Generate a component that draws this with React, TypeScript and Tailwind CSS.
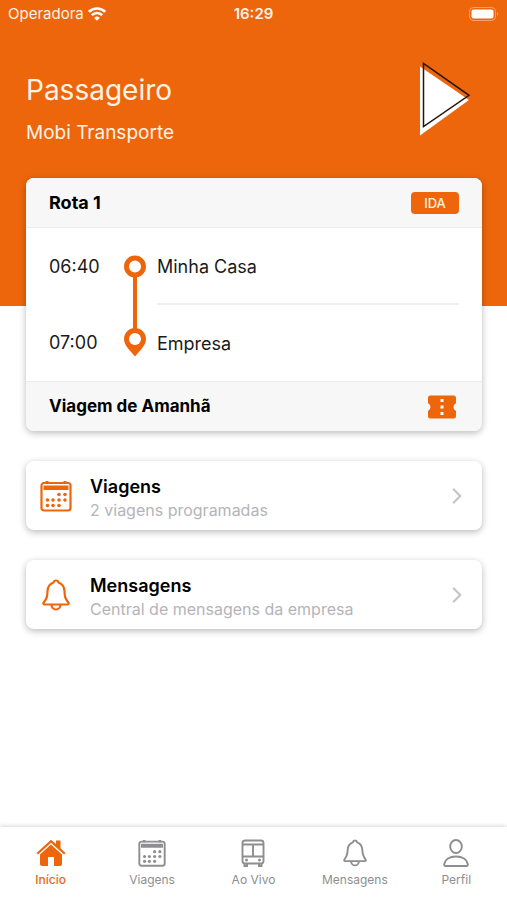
import { useState } from "react";
import { ChevronRight } from "lucide-react";

type IconProps = { className?: string };

function WifiIcon() {
    return (
        <svg viewBox="0 0 18 14" className="w-[18px] h-[14px]" fill="none" stroke="white" strokeWidth="2.6">
            <path d="M0.9 4.800a11.600 11.600 0 0 1 16.200 0" />
            <path d="M3.800 8.200a7.400 7.400 0 0 1 10.400 0" />
            <path d="M9 13.800 6.200 10.900a4 4 0 0 1 5.600 0Z" fill="white" stroke="none" />
        </svg>
    );
}

function BatteryIcon() {
    return (
        <svg viewBox="0 0 30 14" className="w-[30px] h-[14px]">
            <rect x="0.5" y="0.5" width="26" height="13" rx="4" fill="none" stroke="white" strokeOpacity="0.4" />
            <rect x="2.5" y="2.5" width="22" height="9" rx="2" fill="white" />
            <path d="M28 5v4c1.500-.5 1.500-3.500 0-4Z" fill="white" fillOpacity="0.4" />
        </svg>
    );
}

function PlayLogo() {
    return (
        <svg viewBox="0 0 52 76" className="w-[52px] h-[76px]">
            <path d="M1 6.500v69L50 40Z" fill="white" />
            <path d="M4.500 3.500v63L50 35.300Z" fill="none" stroke="#26150c" strokeWidth="1.500" />
        </svg>
    );
}

function RouteLine() {
    return (
        <svg viewBox="0 0 22 102" className="w-[22px] h-[102px]">
            <path d="M11 20v56" stroke="#ed660c" strokeWidth="4" />
            <circle cx="11" cy="11.500" r="8.500" fill="white" stroke="#ed660c" strokeWidth="5" />
            <path d="M11 73a11 11 0 0 0-11 11c0 6.500 6.500 12 11 17.500 4.500-5.500 11-11 11-17.500a11 11 0 0 0-11-11Z" fill="#ed660c" />
            <circle cx="11" cy="84" r="6" fill="white" />
        </svg>
    );
}

function TicketIcon() {
    return (
        <svg viewBox="0 0 30 24" className="w-[30px] h-6">
            <path
                d="M3.500 .5h23A2.500 2.500 0 0 1 29 3v5.200c-3.200 1.500-3.200 6.100 0 7.600V21a2.500 2.500 0 0 1-2.500 2.500h-23A2.500 2.500 0 0 1 1 21v-5.200c3.200-1.500 3.200-6.100 0-7.600V3A2.500 2.500 0 0 1 3.500 .5Z"
                fill="#ed660c"
            />
            <path d="M13.500 4h3v3h-3zM13.500 10.500h3v3h-3zM13.500 17h3v3h-3z" fill="white" />
        </svg>
    );
}

function CalendarIcon({ className }: IconProps) {
    return (
        <svg viewBox="0 0 32 32" className={className} fill="currentColor">
            <rect x="1.500" y="3" width="29" height="27.500" rx="2.500" fill="none" stroke="currentColor" strokeWidth="2.200" />
            <path d="M3.500 5.500h25v4.500h-25zM5.500 1h3v3h-3zM23.500 1h3v3h-3z" />
            {[19, 25].map((x) => <circle key={x} cx={x} cy="14.500" r="1.800" />)}
            {[7.5, 13, 19, 25].map((x) => <circle key={x} cx={x} cy="20" r="1.800" />)}
            {[7.5, 13, 19].map((x) => <circle key={x} cx={x} cy="25.500" r="1.800" />)}
        </svg>
    );
}

function BellIcon({ className }: IconProps) {
    return (
        <svg viewBox="0 0 28 32" className={className} fill="none" stroke="currentColor" strokeWidth="2.200" strokeLinejoin="round">
            <path d="M11.500 3.500c.5-2.700 4.500-2.700 5 0C20.500 5 22.300 8 22.500 12c.2 5.500.5 7.500 3.800 11.500.7 1 .3 2-.8 2h-23c-1.100 0-1.500-1-.8-2C5 19.500 5.300 17.500 5.500 12c.2-4 2-7 6-8.500Z" />
            <path d="M9.500 25.500a4.500 5 0 0 0 9 0" />
        </svg>
    );
}

function HomeIcon({ className }: IconProps) {
    return (
        <svg viewBox="0 0 30 28" className={className} fill="currentColor">
            <path d="M15 .7 20 5V1.500h4.500v7.700L29.500 14 28 15.500 15 3.800 2 15.500.5 14Z" />
            <path d="M15 5.500 26 15.500V25a2 2 0 0 1-2 2h-6v-9h-6v9H6a2 2 0 0 1-2-2v-9.500Z" />
        </svg>
    );
}

function BusIcon({ className }: IconProps) {
    return (
        <svg viewBox="0 0 26 28" className={className} fill="none" stroke="currentColor" strokeWidth="1.900">
            <rect x="2.500" y="1.500" width="21" height="23" rx="2.500" />
            <path d="M2.500 5.500h21M13 5.500v12M2.500 17.500h21" />
            <path d="M4.500 25v2h2.500v-2M19 25v2h2.500v-2" />
            <g fill="currentColor" stroke="none">
                <circle cx="6.500" cy="21" r="1.500" />
                <circle cx="19.500" cy="21" r="1.500" />
            </g>
        </svg>
    );
}

function PersonIcon({ className }: IconProps) {
    return (
        <svg viewBox="0 0 26 28" className={className} fill="none" stroke="currentColor" strokeWidth="1.900" strokeLinejoin="round">
            <ellipse cx="13" cy="7.500" rx="5.800" ry="6.500" />
            <path d="M2.500 27c-1 0-1.500-.8-1.300-2C2 20.500 6.500 17.500 13 17.500S24 20.500 24.800 25c.2 1.200-.3 2-1.300 2Z" />
        </svg>
    );
}

const shortcuts = [
    { title: "Viagens", text: "2 viagens programadas", icon: <CalendarIcon className="w-8 h-8" /> },
    { title: "Mensagens", text: "Central de mensagens da empresa", icon: <BellIcon className="w-7 h-8" /> },
];

const tabs = [
    { name: "Início", icon: <HomeIcon className="w-[30px] h-7" /> },
    { name: "Viagens", icon: <CalendarIcon className="w-7 h-7" /> },
    { name: "Ao Vivo", icon: <BusIcon className="w-[26px] h-7" /> },
    { name: "Mensagens", icon: <BellIcon className="w-6 h-7" /> },
    { name: "Perfil", icon: <PersonIcon className="w-[26px] h-7" /> },
];

export default function App() {
    const [activeTab, setActiveTab] = useState("Início");

    return (
        <div className="min-h-screen flex flex-col bg-white text-black font-['Inter',sans-serif]">
            <header className="bg-[#ed660c] text-[#fff3e6] pb-32">
                <div className="grid grid-cols-3 items-center h-7 px-2 text-[15px]">
                    <div className="flex items-center gap-1">
                        <span>Operadora</span>
                        <WifiIcon />
                    </div>
                    <span className="text-center font-semibold">16:29</span>
                    <div className="flex justify-end">
                        <BatteryIcon />
                    </div>
                </div>
                <div className="flex justify-between items-start pt-8 pl-[26px] pr-9 h-[150px]">
                    <div className="pt-2">
                        <h1 className="text-[28px] leading-[44px]">Passageiro</h1>
                        <p className="text-[19px] leading-[42px]">Mobi Transporte</p>
                    </div>
                    <PlayLogo />
                </div>
            </header>

            <main className="flex-1 flex flex-col gap-[30px] -mt-32 pl-[26px] pr-[25px] pb-8">
                <section className="rounded-lg overflow-hidden bg-white shadow-[0_2px_7px_rgba(0,0,0,0.28)]">
                    <div className="flex items-center justify-between h-[50px] px-[23px] bg-[#f7f7f7] border-b border-[#ececec]">
                        <h2 className="text-lg font-bold">Rota 1</h2>
                        <span className="w-12 h-[22px] rounded bg-[#ed660c] text-[#fff3e6] text-[13px] font-medium text-center leading-[22px]">IDA</span>
                    </div>
                    <div className="flex px-[23px] text-lg text-[#1a1a1a]">
                        <div className="w-[75px]">
                            <p className="h-[76px] leading-[78px]">06:40</p>
                            <p className="h-[76px] leading-[78px]">07:00</p>
                        </div>
                        <div className="w-[33px] pt-[27px]">
                            <RouteLine />
                        </div>
                        <div className="flex-1">
                            <p className="h-[77px] leading-[78px] border-b-2 border-[#efefef]">Minha Casa</p>
                            <p className="h-[76px] leading-[78px]">Empresa</p>
                        </div>
                    </div>
                    <div className="flex items-center justify-between h-[50px] pl-[23px] pr-[25px] bg-[#f7f7f7] border-t border-[#ececec]">
                        <h2 className="text-[17px] font-bold">Viagem de Amanhã</h2>
                        <button aria-label="Ver bilhete">
                            <TicketIcon />
                        </button>
                    </div>
                </section>

                {shortcuts.map((item) => (
                    <button
                        key={item.title}
                        className="flex items-center h-[69px] px-3 rounded-lg bg-white text-left shadow-[0_2px_7px_rgba(0,0,0,0.28)]"
                    >
                        <span className="w-[52px] flex text-[#ed660c]">
                            <span className="w-9 flex justify-center">{item.icon}</span>
                        </span>
                        <span className="flex-1 flex flex-col pt-1">
                            <span className="text-lg leading-6 font-semibold">{item.title}</span>
                            <span className="text-base leading-[22px] text-[#b4b4b9]">{item.text}</span>
                        </span>
                        <ChevronRight className="w-[26px] h-[26px] text-[#c4c4c6]" />
                    </button>
                ))}
            </main>

            <nav className="grid grid-cols-5 h-[73px] pt-3 bg-white shadow-[0_-1px_4px_rgba(0,0,0,0.16)]">
                {tabs.map((tab) => (
                    <button
                        key={tab.name}
                        onClick={() => setActiveTab(tab.name)}
                        className={`flex flex-col items-center gap-[5px] text-xs ${activeTab === tab.name ? "text-[#ed660c] font-medium" : "text-[#8e8e90]"}`}
                    >
                        {tab.icon}
                        <span>{tab.name}</span>
                    </button>
                ))}
            </nav>
        </div>
    );
}
